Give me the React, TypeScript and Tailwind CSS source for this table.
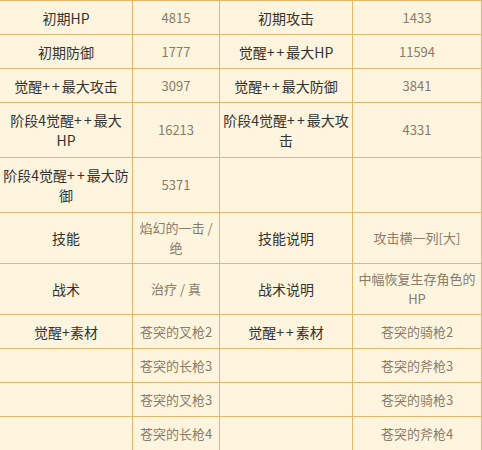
import { ReactNode } from 'react';

type Cell = { text?: ReactNode; label?: boolean };

// the source font draws the plus signs wide, so give them a little air
const PP = () => <span className="tracking-[2px]">++</span>;

const rows: { h: string; cells: Cell[] }[] = [
  { h: 'h-[34px]', cells: [{ text: '初期HP', label: true }, { text: '4815' }, { text: '初期攻击', label: true }, { text: '1433' }] },
  { h: 'h-[34px]', cells: [{ text: '初期防御', label: true }, { text: '1777' }, { text: <>觉醒<PP />最大HP</>, label: true }, { text: '11594' }] },
  { h: 'h-[34px]', cells: [{ text: <>觉醒<PP />最大攻击</>, label: true }, { text: '3097' }, { text: <>觉醒<PP />最大防御</>, label: true }, { text: '3841' }] },
  {
    h: 'h-[55px]',
    cells: [
      { text: <>阶段4觉醒<PP />最大<br />HP</>, label: true },
      { text: '16213' },
      { text: <>阶段4觉醒<PP />最大攻<br />击</>, label: true },
      { text: '4331' },
    ],
  },
  {
    h: 'h-[55px]',
    cells: [{ text: <>阶段4觉醒<PP />最大防<br />御</>, label: true }, { text: '5371' }, {}, {}],
  },
  {
    h: 'h-[51px]',
    cells: [
      { text: '技能', label: true },
      { text: <>焰幻的一击 /<br />绝</> },
      { text: '技能说明', label: true },
      { text: '攻击横一列[大]' },
    ],
  },
  {
    h: 'h-[51px]',
    cells: [
      { text: '战术', label: true },
      { text: '治疗 / 真' },
      { text: '战术说明', label: true },
      { text: <>中幅恢复生存角色的<br />HP</> },
    ],
  },
  { h: 'h-[34px]', cells: [{ text: '觉醒+素材', label: true }, { text: '苍突的叉枪2' }, { text: <>觉醒<PP />素材</>, label: true }, { text: '苍突的骑枪2' }] },
  { h: 'h-[34px]', cells: [{}, { text: '苍突的长枪3' }, {}, { text: '苍突的斧枪3' }] },
  { h: 'h-[34px]', cells: [{}, { text: '苍突的叉枪3' }, {}, { text: '苍突的骑枪3' }] },
  { h: 'h-[34px]', cells: [{}, { text: '苍突的长枪4' }, {}, { text: '苍突的斧枪4' }] },
];

export default function App() {
  return (
    <div className="h-[450px] w-[482px] overflow-hidden bg-[#fff5de] font-['Noto_Sans_CJK_SC','Microsoft_YaHei',sans-serif]">
      <div className="grid grid-cols-[133px_87px_133px_129px] border-t border-[#e3b76e]">
        {rows.map((row, r) =>
          row.cells.map((cell, c) => (
            <div
              key={`${r}-${c}`}
              className={`${row.h} flex items-center justify-center border-b border-r border-[#e3b76e] px-0.5 text-center leading-5 ${
                cell.label ? 'text-[14px] text-[#333333]' : 'text-[13px] text-[#8b7b69]'
              }`}
            >
              {cell.text && <span>{cell.text}</span>}
            </div>
          )),
        )}
      </div>
    </div>
  );
}
